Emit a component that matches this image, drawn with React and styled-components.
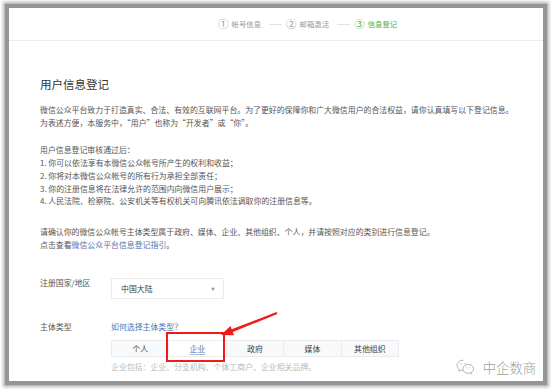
import React from "react";
import styled, { createGlobalStyle } from "styled-components";

const Global = createGlobalStyle`
  html, body { margin: 0; padding: 0; background: #ffffff; }
  body { font-family: "Noto Sans CJK SC", "Noto Sans", sans-serif; }
`;

const Page = styled.div`
  position: relative;
  width: 554px;
  height: 392px;
  overflow: hidden;
`;

const Frame = styled.div`
  position: relative;
  box-sizing: border-box;
  margin: 4px 0 0 5px;
  width: 542px;
  height: 381px;
  border: 4px solid #959595;
  box-shadow: 0 0 3px 2px rgba(0, 0, 0, 0.3);
  background: #fff;
`;

const Header = styled.div`
  display: flex;
  align-items: center;
  height: 32px;
  padding-left: 209px;
  border-bottom: 1px solid #ececec;
`;

const Step = styled.div`
  display: flex;
  align-items: center;
  gap: 3px;
  color: ${(p) => (p.$active ? "#44b549" : "#9a9a9a")};
`;

const StepNum = styled.span`
  font-size: 10.5px;
  line-height: 12px;
`;

const StepText = styled.span`
  font-size: 7.4px;
  line-height: 12px;
`;

const StepLine = styled.span`
  width: 13px;
  height: 1px;
  background: #e2e2e2;
  margin: 0 4px 0 8px;
`;

const Content = styled.div`
  padding: 35px 0 0 31px;
  color: #555;
  font-size: 7.9px;
`;

const Title = styled.div`
  font-size: 11.5px;
  line-height: 16px;
  color: #353535;
`;

const Para = styled.div`
  margin-top: ${(p) => p.$mt}px;
  line-height: 12.7px;
  white-space: nowrap;
`;

const Link = styled.span`
  color: #5573ad;
`;

const Row = styled.div`
  display: flex;
  align-items: flex-start;
  margin-top: ${(p) => p.$mt}px;
`;

const Label = styled.div`
  width: 71px;
  line-height: 12px;
  color: #555;
`;

const Field = styled.div`
  display: flex;
  flex-direction: column;
`;

const Select = styled.div`
  box-sizing: border-box;
  margin-top: 1px;
  width: 113px;
  height: 21px;
  border: 1px solid #ededed;
  display: flex;
  align-items: center;
  justify-content: space-between;
  padding: 0 8px 0 9px;
  color: #3a3a3a;
`;

const Caret = styled.span`
  font-size: 4px;
  color: #999;
`;

const HelpLink = styled.div`
  line-height: 12px;
  color: #5573ad;
`;

const Group = styled.div`
  box-sizing: border-box;
  margin-top: 7px;
  width: 288px;
  height: 17px;
  display: flex;
  border: 1px solid #ebebee;
  background: #f8f9fa;
`;

const GroupBtn = styled.div`
  flex: 1;
  display: flex;
  align-items: center;
  justify-content: center;
  color: ${(p) => (p.$active ? "#5a74a8" : "#444")};
  background: ${(p) => (p.$active ? "#fff" : "transparent")};
  border-left: ${(p) => (p.$first ? "none" : "1px solid #ebebee")};
  text-decoration: ${(p) => (p.$active ? "underline" : "none")};
  text-decoration-color: #a9b8d4;
  text-underline-offset: 2px;
`;

const Note = styled.div`
  margin-top: 4px;
  line-height: 12px;
  color: #bbb;
`;

const Watermark = styled.div`
  position: absolute;
  right: 7px;
  bottom: 5px;
  display: flex;
  align-items: center;
  gap: 8px;
  color: #a0a0a0;
  font-size: 13.3px;
  font-weight: 300;
  line-height: 16px;
`;

const Overlay = styled.svg`
  position: absolute;
  left: 0;
  top: 0;
  pointer-events: none;
`;

const WeChatIcon = () => (
  <svg width="19" height="17" viewBox="0 0 19 17" fill="none" stroke="#ababab" strokeWidth="0.9">
    <path d="M7.5 1.2C3.9 1.2 1 3.5 1 6.4c0 1.6.9 3 2.3 4l-.5 1.8 2.1-1.1c.8.2 1.6.4 2.6.4" />
    <path d="M12.2 5.4c-3 0-5.4 2-5.4 4.4s2.4 4.4 5.4 4.4c.7 0 1.3-.1 1.9-.3l1.7.9-.4-1.5c1.3-.8 2.1-2 2.1-3.5 0-2.4-2.4-4.4-5.3-4.4z" />
    <circle cx="5.2" cy="4.6" r="0.6" fill="#ababab" stroke="none" />
    <circle cx="9" cy="4.6" r="0.6" fill="#ababab" stroke="none" />
    <circle cx="10.5" cy="8.8" r="0.55" fill="#ababab" stroke="none" />
    <circle cx="13.9" cy="8.8" r="0.55" fill="#ababab" stroke="none" />
  </svg>
);

const types = ["个人", "企业", "政府", "媒体", "其他组织"];

export default function App() {
  return (
    <Page>
      <Global />
      <Frame>
        <Header>
          <Step>
            <StepNum>①</StepNum>
            <StepText>帐号信息</StepText>
          </Step>
          <StepLine />
          <Step>
            <StepNum>②</StepNum>
            <StepText>邮箱激活</StepText>
          </Step>
          <StepLine />
          <Step $active>
            <StepNum>③</StepNum>
            <StepText>信息登记</StepText>
          </Step>
        </Header>
        <Content>
          <Title>用户信息登记</Title>
          <Para $mt={12}>
            微信公众平台致力于打造真实、合法、有效的互联网平台。为了更好的保障你和广大微信用户的合法权益，请你认真填写以下登记信息。
            <br />
            为表述方便，本服务中，“用户”也称为“开发者”或“你”。
          </Para>
          <Para $mt={15}>
            用户信息登记审核通过后：
            <br />
            1. 你可以依法享有本微信公众帐号所产生的权利和收益；
            <br />
            2. 你将对本微信公众帐号的所有行为承担全部责任；
            <br />
            3. 你的注册信息将在法律允许的范围内向微信用户展示；
            <br />
            4. 人民法院、检察院、公安机关等有权机关可向腾讯依法调取你的注册信息等。
          </Para>
          <Para $mt={18}>
            请确认你的微信公众帐号主体类型属于政府、媒体、企业、其他组织、个人，并请按照对应的类别进行信息登记。
            <br />
            点击查看<Link>微信公众平台信息登记指引</Link>。
          </Para>
          <Row $mt={26}>
            <Label>注册国家/地区</Label>
            <Field>
              <Select>
                <span>中国大陆</span>
                <Caret>▼</Caret>
              </Select>
            </Field>
          </Row>
          <Row $mt={22}>
            <Label>主体类型</Label>
            <Field>
              <HelpLink>如何选择主体类型？</HelpLink>
              <Group>
                {types.map((t, i) => (
                  <GroupBtn key={t} $first={i === 0} $active={t === "企业"}>
                    {t}
                  </GroupBtn>
                ))}
              </Group>
              <Note>企业包括：企业、分支机构、个体工商户、企业相关品牌。</Note>
            </Field>
          </Row>
        </Content>
        <Watermark>
          <WeChatIcon />
          <span>中企数商</span>
        </Watermark>
      </Frame>
      <Overlay width="554" height="392" viewBox="0 0 554 392">
        <rect x="167" y="333" width="57" height="28" fill="none" stroke="#ee1c17" strokeWidth="2" />
        <polygon
          points="221,335 230.4,326 231.65,329.2 276.6,312.1 277.4,313.9 232.75,332 234,335.3"
          fill="#ee1c17"
        />
      </Overlay>
    </Page>
  );
}
